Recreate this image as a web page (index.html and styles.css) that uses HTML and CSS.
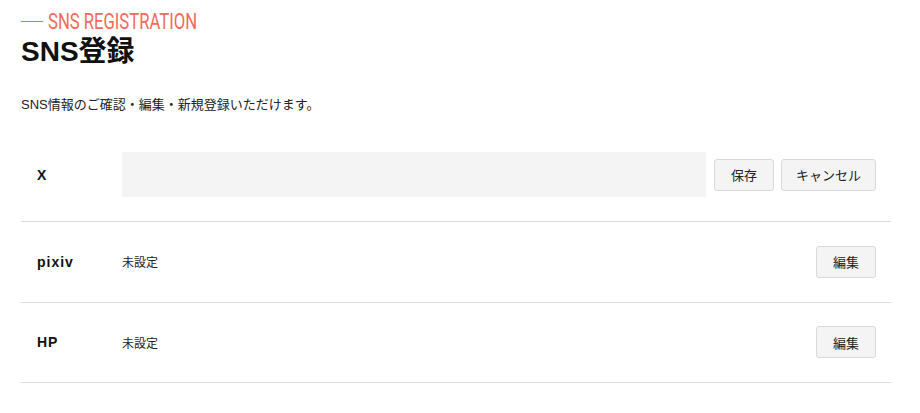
FILE: index.html
```html
<!DOCTYPE html>
<html lang="ja">
<head>
<meta charset="utf-8">
<link rel="stylesheet" href="styles.css">
</head>
<body>
<div class="page">
  <div class="eyebrow"><span class="eyebrow-line"></span><span class="eyebrow-text">SNS REGISTRATION</span></div>
  <h1 class="title">SNS登録</h1>
  <p class="lead">SNS情報のご確認・編集・新規登録いただけます。</p>
  <div class="list">
    <div class="row">
      <div class="label">X</div>
      <div class="field"><input class="input" type="text"></div>
      <div class="actions">
        <button class="btn">保存</button>
        <button class="btn">キャンセル</button>
      </div>
    </div>
    <div class="row">
      <div class="label">pixiv</div>
      <div class="field"><span class="value">未設定</span></div>
      <div class="actions"><button class="btn">編集</button></div>
    </div>
    <div class="row">
      <div class="label">HP</div>
      <div class="field"><span class="value">未設定</span></div>
      <div class="actions"><button class="btn">編集</button></div>
    </div>
  </div>
</div>
</body>
</html>
```

FILE: styles.css
```css
* { box-sizing: border-box; }
html, body { margin: 0; padding: 0; background: #fff; }
body {
  font-family: "Liberation Sans", "Noto Sans CJK JP", sans-serif;
  color: #222;
}
.page {
  width: 870px;
  margin-left: 21px;
  padding-top: 9px;
}
.eyebrow {
  display: flex;
  align-items: center;
  height: 24px;
  color: #ef6a5b;
}
.eyebrow-line {
  width: 22px;
  height: 1px;
  background: #ef6a5b;
  margin-right: 5px;
}
.eyebrow-text {
  display: inline-block;
  font-family: "Roboto", sans-serif;
  font-weight: 400;
  font-size: 22.5px;
  line-height: 24px;
  transform: scaleX(0.74);
  transform-origin: left center;
  white-space: nowrap;
}
.title {
  margin: 2px 0 0;
  font-size: 28px;
  line-height: 34px;
  font-weight: 700;
  color: #111;
}
.lead {
  margin: 27px 0 0;
  font-size: 13px;
  line-height: 18px;
  color: #222;
}
.list {
  margin-top: 14.5px;
}
.row {
  display: flex;
  align-items: center;
  padding: 23.5px 15px 24px 16px;
  border-bottom: 1px solid #dcdcdc;
}
.label {
  width: 85px;
  flex: none;
  font-size: 14px;
  font-weight: 700;
  letter-spacing: 1px;
  color: #111;
}
.field {
  flex: 1;
  display: flex;
  align-items: center;
}
.input {
  width: 100%;
  height: 45px;
  border: none;
  background: #f4f4f4;
  outline: none;
  font-size: 14px;
  padding: 0 12px;
}
.value {
  font-size: 12px;
  color: #222;
}
.actions {
  display: flex;
  gap: 7px;
  margin-left: 8px;
}
.btn {
  height: 32px;
  min-width: 60px;
  padding: 0 14px;
  border: 1px solid #d9d9d9;
  border-radius: 3px;
  background: #f4f4f4;
  font-family: "Noto Sans CJK JP", sans-serif;
  font-size: 13px;
  color: #222;
}
```
